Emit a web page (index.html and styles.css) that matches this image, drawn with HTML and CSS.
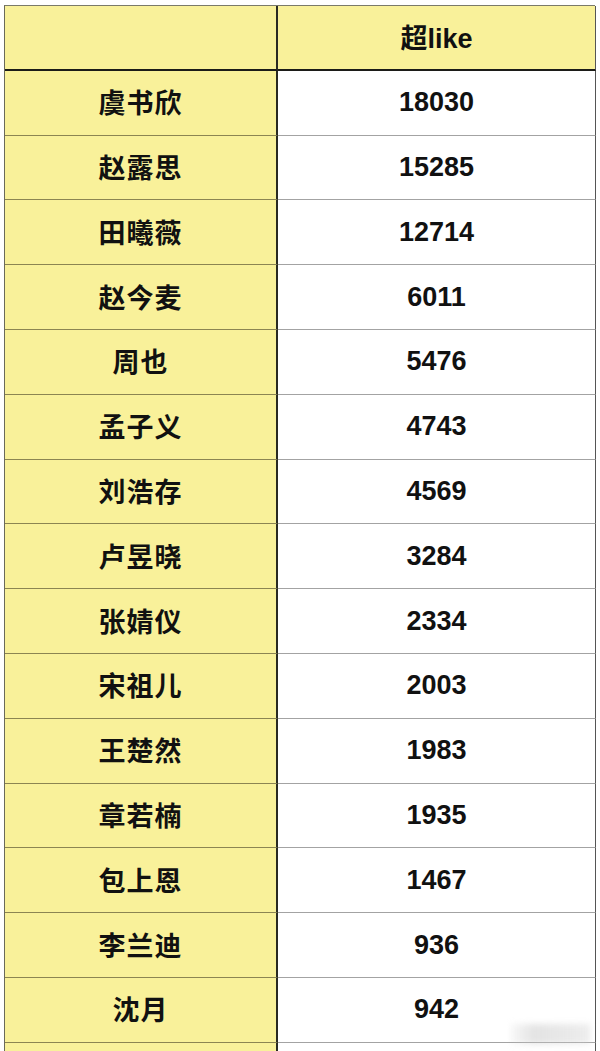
FILE: index.html
```html
<!DOCTYPE html>
<html lang="zh">
<head>
<meta charset="utf-8">
<title>超like</title>
<link rel="stylesheet" href="styles.css">
</head>
<body>
<div class="page">
  <div class="sheet">
    <div class="cell name head"></div>
    <div class="cell val head">超like</div>

    <div class="cell name">虞书欣</div><div class="cell val">18030</div>
    <div class="cell name">赵露思</div><div class="cell val">15285</div>
    <div class="cell name">田曦薇</div><div class="cell val">12714</div>
    <div class="cell name">赵今麦</div><div class="cell val">6011</div>
    <div class="cell name">周也</div><div class="cell val">5476</div>
    <div class="cell name">孟子义</div><div class="cell val">4743</div>
    <div class="cell name">刘浩存</div><div class="cell val">4569</div>
    <div class="cell name">卢昱晓</div><div class="cell val">3284</div>
    <div class="cell name">张婧仪</div><div class="cell val">2334</div>
    <div class="cell name">宋祖儿</div><div class="cell val">2003</div>
    <div class="cell name">王楚然</div><div class="cell val">1983</div>
    <div class="cell name">章若楠</div><div class="cell val">1935</div>
    <div class="cell name">包上恩</div><div class="cell val">1467</div>
    <div class="cell name">李兰迪</div><div class="cell val">936</div>
    <div class="cell name">沈月</div><div class="cell val">942</div>
    <div class="cell name"></div><div class="cell val"></div>
  </div>
  <div class="mark"></div>
</div>
</body>
</html>
```
FILE: styles.css
```css
html, body {
  margin: 0;
  padding: 0;
  background: #ffffff;
}
.page {
  position: relative;
  width: 600px;
  height: 1051px;
  overflow: hidden;
  padding: 5px 0 0 4px;
  box-sizing: border-box;
}
.sheet {
  display: grid;
  grid-template-columns: 273px 318px;
  grid-auto-rows: 64.8px;
  width: 591px;
  border-top: 1px solid #7a7a6a;
  border-left: 1px solid #6a6a5a;
  box-sizing: border-box;
}
.cell {
  display: flex;
  align-items: center;
  justify-content: center;
  box-sizing: border-box;
  color: #111111;
  font-weight: bold;
}
.name {
  background: #f9f19a;
  border-right: 2px solid #2a2a22;
  border-bottom: 1px solid #8c8552;
  font-family: "Noto Sans CJK SC", "Noto Sans", sans-serif;
  font-size: 27px;
  letter-spacing: 1px;
  padding-bottom: 2px;
}
.val {
  background: #ffffff;
  border-right: 1px solid #555555;
  border-bottom: 1px solid #a3a3a3;
  font-family: "Liberation Sans", Arial, sans-serif;
  font-size: 27px;
}
.head {
  background: #f9f19a;
  height: 65px;
  border-bottom: 2px solid #1c1c18;
}
.val.head {
  font-family: "Liberation Sans", "Noto Sans CJK SC", sans-serif;
  font-size: 27px;
  padding-bottom: 2px;
}
.mark {
  position: absolute;
  left: 510px;
  top: 1024px;
  width: 80px;
  height: 20px;
  background: linear-gradient(90deg, rgba(200,200,200,0.1), rgba(200,200,200,0.5) 30%, rgba(210,210,210,0.4));
  filter: blur(3px);
}
```
